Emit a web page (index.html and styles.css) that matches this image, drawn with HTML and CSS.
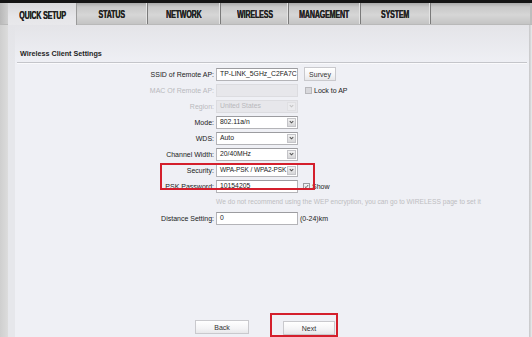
FILE: index.html
```html
<!DOCTYPE html>
<html>
<head>
<meta charset="utf-8">
<link rel="stylesheet" href="styles.css">
</head>
<body>
<div class="frame">
  <div class="topbar"></div>
  <nav class="tabs">
    <div class="tab active"><span>QUICK SETUP</span></div>
    <div class="tab"><span>STATUS</span></div>
    <div class="tab"><span>NETWORK</span></div>
    <div class="tab"><span>WIRELESS</span></div>
    <div class="tab"><span>MANAGEMENT</span></div>
    <div class="tab"><span>SYSTEM</span></div>
    <div class="tab-fill"></div>
  </nav>
  <div class="main">
    <div class="side"></div>
    <div class="panel">
      <h2 class="title">Wireless Client Settings</h2>
      <div class="form">
        <label class="lbl">SSID of Remote AP:</label>
        <div class="field"><span class="input"><span class="val">TP-LINK_5GHz_C2FA7C</span></span><span class="btn survey">Survey</span></div>

        <label class="lbl off">MAC Of Remote AP:</label>
        <div class="field"><span class="input disabled"></span><span class="check disabled"></span><span class="aside">Lock to AP</span></div>

        <label class="lbl off">Region:</label>
        <div class="field"><span class="input select disabled"><span class="val">United States</span><i class="arrow"><svg viewBox="0 0 8 8" width="8" height="8"><path d="M2 3 L4 5 L6 3" fill="none" stroke="#c4c4c4" stroke-width="1.2"/></svg></i></span></div>

        <label class="lbl">Mode:</label>
        <div class="field"><span class="input select"><span class="val">802.11a/n</span><i class="arrow"><svg viewBox="0 0 8 8" width="8" height="8"><path d="M2 3 L4 5 L6 3" fill="none" stroke="#555" stroke-width="1.2"/></svg></i></span></div>

        <label class="lbl">WDS:</label>
        <div class="field"><span class="input select"><span class="val">Auto</span><i class="arrow"><svg viewBox="0 0 8 8" width="8" height="8"><path d="M2 3 L4 5 L6 3" fill="none" stroke="#555" stroke-width="1.2"/></svg></i></span></div>

        <label class="lbl">Channel Width:</label>
        <div class="field"><span class="input select"><span class="val">20/40MHz</span><i class="arrow"><svg viewBox="0 0 8 8" width="8" height="8"><path d="M2 3 L4 5 L6 3" fill="none" stroke="#555" stroke-width="1.2"/></svg></i></span></div>

        <label class="lbl">Security:</label>
        <div class="field"><span class="input select"><span class="val tight">WPA-PSK / WPA2-PSK</span><i class="arrow"><svg viewBox="0 0 8 8" width="8" height="8"><path d="M2 3 L4 5 L6 3" fill="none" stroke="#555" stroke-width="1.2"/></svg></i></span></div>

        <label class="lbl">PSK Password:</label>
        <div class="field"><span class="input"><span class="val">10154205</span></span><span class="check on"><svg viewBox="0 0 7 7" width="7" height="7"><path d="M1.2 3.6 L2.8 5.2 L5.8 1.4" fill="none" stroke="#333" stroke-width="1"/></svg></span><span class="aside show">Show</span></div>

        <div class="spacer"></div>
        <div class="field note">We do not recommend using the WEP encryption, you can go to WIRELESS page to set it</div>

        <label class="lbl">Distance Setting:</label>
        <div class="field"><span class="input"><span class="val">0</span></span><span class="aside unit">(0-24)km</span></div>

        <div class="highlight"></div>
      </div>
      <div class="actions">
        <span class="btn back">Back</span>
        <span class="mark"><span class="btn next">Next</span></span>
      </div>
    </div>
    <div class="edge"></div>
  </div>
</div>
</body>
</html>
```

FILE: styles.css
```css
* { box-sizing: border-box; }
html, body { margin: 0; padding: 0; }
body {
  width: 532px;
  height: 337px;
  overflow: hidden;
  font-family: "Liberation Sans", Arial, sans-serif;
  font-size: 7px;
  color: #222;
  background: #eff0f5;
}
.frame {
  display: flex;
  flex-direction: column;
  width: 532px;
  height: 337px;
}
.topbar {
  height: 3px;
  background: #141414;
  flex: none;
}
.tabs {
  height: 22px;
  flex: none;
  display: grid;
  grid-template-columns: 8px 69px 71px 73px 68px 72px 70px 1fr;
  background: linear-gradient(#a9a9a9 0, #c9c9c9 4px, #d6d6d6 12px, #c4c4c4 100%);
  border-bottom: 1px solid #b9b9b9;
}
.tabs::before {
  content: "";
  background: linear-gradient(to right, #b8b8b8, #cfcfcf);
}
.tab {
  display: flex;
  align-items: center;
  justify-content: center;
  border-right: 1px solid #7a7a7a;
  box-shadow: inset -1px 0 0 #e4e4e4;
}
.tab span {
  display: inline-block;
  font-family: "Liberation Sans", Arial, sans-serif;
  font-weight: bold;
  font-size: 11px;
  letter-spacing: -0.2px;
  color: #222;
  transform: scaleX(0.64);
  white-space: nowrap;
  margin-top: 1px;
  text-shadow: 0.3px 0 0 #222;
}
.tab.active {
  background: linear-gradient(#d8d8da, #e6e6e9 60%, #e8e8eb);
  border-right: 1px solid #9a9a9a;
  box-shadow: none;
  margin-bottom: -1px;
}
.tab-fill {
  border-right: 2px solid #bdbdbd;
}
.main {
  flex: 1;
  display: flex;
  min-height: 0;
}
.side {
  width: 8px;
  flex: none;
  background: linear-gradient(to right, #cfcfcf, #dcdcdc);
}
.edge {
  width: 3px;
  flex: none;
  background: linear-gradient(to right, #c6c6c8, #d6d6d8 50%, #ececee);
}
.panel {
  flex: 1;
  display: flex;
  flex-direction: column;
  padding-left: 9px;
  padding-right: 2px;
  background:
    linear-gradient(rgba(228,228,232,1) 0, rgba(239,240,245,0) 40px),
    linear-gradient(to right, #e6e7eb 0, #e6e7eb 7px, #eff0f5 7px);
}
.title {
  margin: 24px 0 0 0;
  padding: 0 0 3px 3px;
  font-size: 7.2px;
  font-weight: bold;
  line-height: 10px;
  color: #1e1e1e;
  border-bottom: 1px solid #c4c5ca;
  box-shadow: 0 1px 0 #fafafc;
}
.form {
  position: relative;
  margin-top: 3px;
  display: grid;
  grid-template-columns: 197px 1fr;
  grid-auto-rows: 16px;
  column-gap: 2px;
}
.lbl {
  text-align: right;
  display: flex;
  align-items: center;
  justify-content: flex-end;
  white-space: nowrap;
}
.lbl.off { color: #b9b9bd; }
.field {
  display: flex;
  align-items: center;
  white-space: nowrap;
}
.input {
  position: relative;
  display: flex;
  align-items: center;
  width: 82px;
  height: 13px;
  padding-left: 3px;
  background: #fff;
  border: 1px solid #b4b4b8;
  border-top-color: #9c9ca0;
  color: #222;
  font-size: 6.8px;
}
.val {
  white-space: nowrap;
  line-height: 10px;
}
.val.tight { font-size: 6.5px; letter-spacing: -0.1px; }
.input.disabled {
  background: #e7e7eb;
  border-color: #dcdce0;
  color: #b8b8bc;
}
.arrow {
  position: absolute;
  right: 1px;
  top: 1px;
  width: 9px;
  height: 9px;
  background: linear-gradient(#f2f2f2, #d6d6d8);
  border: 1px solid #c4c4c8;
  display: flex;
  align-items: center;
  justify-content: center;
}
.input.disabled .arrow {
  background: #ebebee;
  border-color: #e0e0e3;
}
.btn {
  display: inline-flex;
  align-items: center;
  justify-content: center;
  height: 14px;
  background: linear-gradient(#ffffff, #f4f4f6 60%, #e8e8ea);
  border: 1px solid #c9c9cd;
  color: #333;
}
.survey {
  width: 32px;
  margin-left: 6px;
}
.check {
  width: 7px;
  height: 7px;
  border: 1px solid #9a9a9e;
  background: #e4e4e6;
  display: inline-flex;
  align-items: center;
  justify-content: center;
  margin-left: 7px;
}
.check.disabled {
  background: #d8d8dc;
  border-color: #b8b8bc;
}
.check.on {
  margin-left: 5px;
  background: #f0f0f2;
}
.check svg { display: block; }
.aside { margin-left: 2px; color: #222; }
.show { margin-left: 2px; }
.unit { margin-left: 2px; }
.highlight {
  position: absolute;
  grid-row: 7 / span 2;
  grid-column: 1 / -1;
  top: 1px;
  left: 143px;
  width: 155px;
  height: 27px;
  border: 2px solid #d41f2c;
  pointer-events: none;
}
.spacer { grid-row: 9; grid-column: 1; }
.note {
  grid-row: 9;
  grid-column: 2;
  color: #bdbdc1;
  font-size: 6.65px;
  height: 15px;
}
.actions {
  margin-top: auto;
  display: flex;
  justify-content: center;
  align-items: flex-start;
  gap: 21px;
  padding-right: 11px;
}
.back {
  width: 54px;
  margin-top: 7px;
}
.mark {
  display: block;
  height: 24px;
  padding: 6px 1px 0 11px;
  border: 2px solid #d41f2c;
}
.next {
  width: 52px;
}
```
